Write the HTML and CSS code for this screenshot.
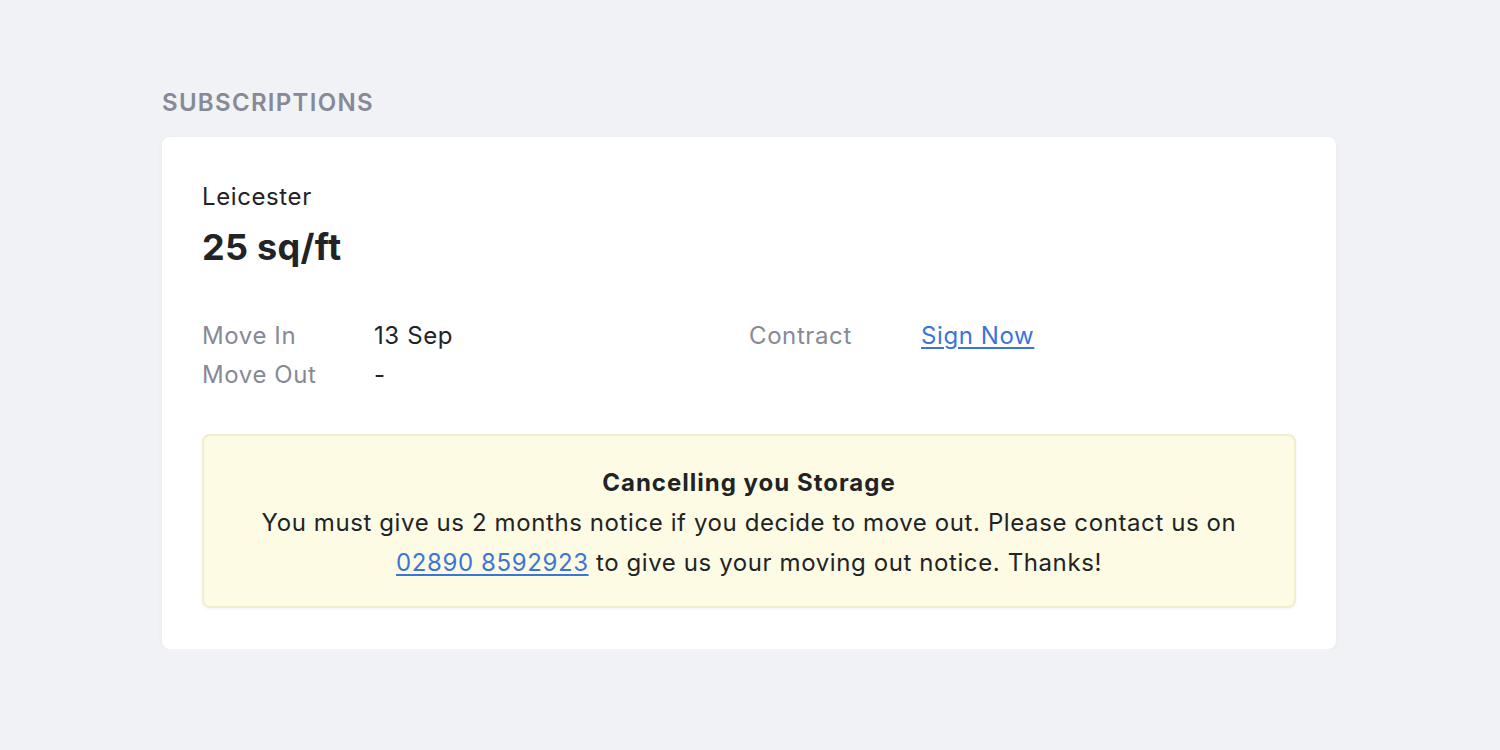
FILE: index.html
```html
<!DOCTYPE html>
<html lang="en">
  <head>
    <meta charset="UTF-8" />
    <title>Subscriptions</title>
    <link rel="stylesheet" href="styles.css">
  </head>
  <body>
    <div class="wrap">
      <h2 class="title">SUBSCRIPTIONS</h2>
      <div class="card">
        <div class="site">Leicester</div>
        <div class="size">25 sq/ft</div>

        <div class="info">
          <div class="col">
            <div class="row">
              <span class="label">Move In</span>
              <span class="value">13 Sep</span>
            </div>
            <div class="row">
              <span class="label">Move Out</span>
              <span class="value">-</span>
            </div>
          </div>
          <div class="col">
            <div class="row">
              <span class="label">Contract</span>
              <a class="value link" href="#">Sign Now</a>
            </div>
          </div>
        </div>

        <div class="notice">
          <p class="notice-title">Cancelling you Storage</p>
          <p>You must give us 2 months notice if you decide to move out. Please contact us on
            <a class="link" href="#">02890 8592923</a> to give us your moving out notice. Thanks!</p>
        </div>
      </div>
    </div>
  </body>
</html>
```

FILE: styles.css
```css
* {
  margin: 0;
  padding: 0;
  box-sizing: border-box;
}
body {
  background-color: #f1f2f6;
  font-family: Inter, "Noto Sans", sans-serif;
  color: #222326;
  letter-spacing: 0.6px;
}
.wrap {
  width: 1174px;
  margin: 0 0 0 162px;
  padding-top: 87px;
}
.title {
  font-size: 24px;
  line-height: 32px;
  font-weight: 600;
  color: #878a96;
  letter-spacing: 1.3px;
  margin-bottom: 18px;
}
.card {
  background-color: #fff;
  border-radius: 8px;
  padding: 40px 40px 41px;
  box-shadow: 0 2px 6px rgba(30, 35, 60, 0.04);
}
.site {
  font-size: 24px;
  line-height: 40px;
}
.size {
  font-size: 36px;
  line-height: 60px;
  font-weight: 700;
  letter-spacing: 0.3px;
}
/* 两列，每列 label + value */
.info {
  display: flex;
  margin-top: 39px;
}
.col {
  flex: 1;
}
.row {
  display: flex;
  font-size: 24px;
  line-height: 39px;
}
.label {
  width: 172px;
  color: #878a96;
}
.link {
  color: #3d74d8;
  text-decoration: underline;
  text-underline-offset: 3px;
  text-decoration-thickness: 2px;
}
.notice {
  margin-top: 40px;
  background-color: #fdfbe4;
  border: 2px solid #f1eecf;
  border-radius: 8px;
  padding: 27px 50px 23px;
  text-align: center;
  font-size: 24px;
  line-height: 40px;
  box-shadow: 0 1px 3px rgba(0, 0, 0, 0.05);
}
.notice-title {
  font-weight: 700;
  letter-spacing: 1px;
}
```
